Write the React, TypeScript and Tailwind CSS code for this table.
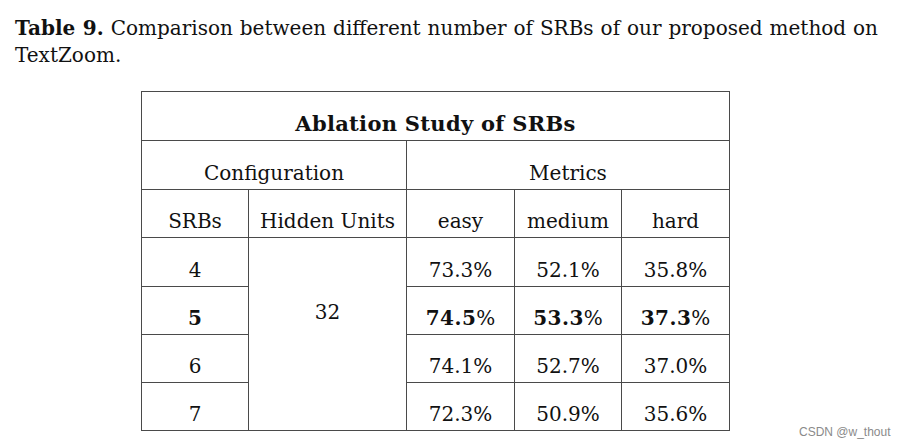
import React from "react";

const line = "bg-[#4a4a4a]";

function Cell({ children, className = "" }: { children?: React.ReactNode; className?: string }) {
  return (
    <div className={`bg-white flex items-end justify-center pb-[6px] leading-[20px] ${className}`}>
      {children}
    </div>
  );
}

function B({ v }: { v: string }) {
  return (
    <span>
      <span className="font-bold tracking-[0.5px]">{v}</span>%
    </span>
  );
}

export default function App() {
  const rows: [React.ReactNode, React.ReactNode, React.ReactNode, React.ReactNode][] = [
    ["4", "73.3%", "52.1%", "35.8%"],
    [<span className="font-bold">5</span>, <B v="74.5" />, <B v="53.3" />, <B v="37.3" />],
    ["6", "74.1%", "52.7%", "37.0%"],
    ["7", "72.3%", "50.9%", "35.6%"],
  ];
  return (
    <div
      className="relative w-[908px] h-[448px] bg-white text-[#111] overflow-hidden"
      style={{ fontFamily: '"DejaVu Serif", serif' }}
    >
      <div className="pl-[15px] w-[878px] pt-[15px] text-[20px] leading-[27px]">
        <div className="text-justify [text-align-last:justify]">
          <span className="font-bold">Table 9.</span> Comparison between different number of SRBs of our proposed method on
        </div>
        <div>TextZoom.</div>
      </div>
      <div className="ml-[141px] mt-[22px] w-[589px]">
        <div
          className={`grid ${line} p-px gap-px text-[20px] grid-cols-[106px_157px_107px_106px_107px] grid-rows-[48px_48px_47px_48px_47px_47px_47px]`}
        >
          <Cell className="col-span-5 font-bold text-[21px] tracking-[0.3px]">Ablation Study of SRBs</Cell>
          <Cell className="col-span-2">Configuration</Cell>
          <Cell className="col-span-3">Metrics</Cell>
          <Cell>SRBs</Cell>
          <Cell>Hidden Units</Cell>
          <Cell>easy</Cell>
          <Cell>medium</Cell>
          <Cell>hard</Cell>
          {rows.map((r, i) => (
            <React.Fragment key={i}>
              <Cell className="col-start-1">{r[0]}</Cell>
              {i === 0 && (
                <div
                  className="bg-white col-start-2 flex justify-center items-start pt-[64px] leading-[20px]"
                  style={{ gridRow: "4 / span 4" }}
                >
                  32
                </div>
              )}
              <Cell className="col-start-3">{r[1]}</Cell>
              <Cell>{r[2]}</Cell>
              <Cell>{r[3]}</Cell>
            </React.Fragment>
          ))}
        </div>
      </div>
      <div
        className="absolute left-[799px] top-[424px] text-[12px] leading-[16px] text-[#8a8a8a]"
        style={{ fontFamily: '"Liberation Sans", Arial, sans-serif' }}
      >
        CSDN @w_thout
      </div>
    </div>
  );
}
